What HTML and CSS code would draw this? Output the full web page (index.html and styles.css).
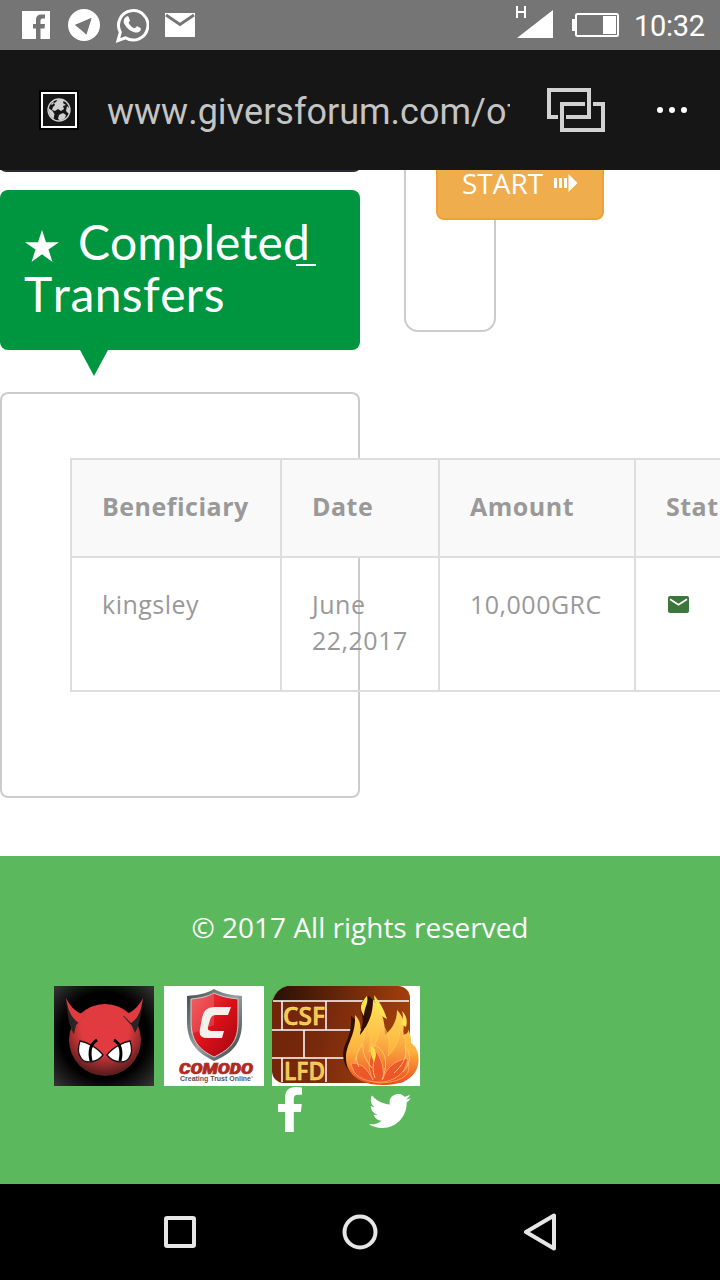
FILE: index.html
```
<!DOCTYPE html>
<html lang="en">
<head>
<meta charset="utf-8">
<title>Givers Forum</title>
<link rel="stylesheet" href="styles.css">
</head>
<body>
<header class="status">
  <div class="status-apps">
    <svg width="28" height="28" viewBox="0 0 28 28"><path fill="#fff" d="M0 0h28v28h-9.500v-10.500h4l.5-4.500h-4.500V9.500q0-2 2-2H23V3.500h-4q-5 0-5 5.500v4h-3v4.500h3V28H0z"/></svg>
    <svg width="32" height="32" viewBox="0 0 32 32"><circle cx="16" cy="16" r="16" fill="#fff"/><path fill="#757575" d="M23.500 9 7 16l5 2.500L20.500 12l-6 8 3.500 5.500z"/><path fill="#757575" d="M23.500 9 7 16l11.500 9.500z"/></svg>
    <svg width="34" height="36" viewBox="0 0 34 36"><path fill="none" stroke="#fff" stroke-width="3" d="M3 33.500l2.300-8.200A14.700 14.700 0 1 1 10.500 30.800z"/><path fill="#fff" d="M11.500 9.500c1.500-.8 2 0 2.400 1l1 2.700c.2 1-1.500 2-1.200 2.700 1.200 2.500 3.300 4.300 5.800 5.300.8.2 1.800-2.200 2.800-1.900l3.200 1.600c.8.500.3 2.500-.6 3.400-2.500 2.200-5.700 1.300-8.700-.2-3.300-1.700-6-4.800-7.300-8-.8-2.500.4-5.500 2.600-6.600z"/></svg>
    <svg width="30" height="24" viewBox="0 0 30 24"><path fill="#fff" d="M0 0h30v24H0z"/><path fill="none" stroke="#757575" stroke-width="2.800" d="M1 2l14 9.500L29 2"/></svg>
  </div>
  <div class="status-info">
    <div class="signal"><svg width="38" height="36" viewBox="0 0 38 36"><path fill="#fff" d="M37 7v28H1z"/><path fill="none" stroke="#fff" stroke-width="2" d="M1 3v12M9 3v12M1 9h8"/></svg></div>
    <svg width="48" height="24" viewBox="0 0 48 24"><path fill="#fff" d="M0 6h4v12H0zM31 3h13v18H31z"/><rect x="4" y="1" width="42" height="22" rx="1.500" fill="none" stroke="#fff" stroke-width="2"/></svg>
    <span class="clock">10:32</span>
  </div>
</header>
<div class="browser">
  <svg class="favicon" width="40" height="40" viewBox="0 0 40 40"><path fill="#000" d="M0 0h40v40H0z"/><rect x="3" y="3" width="34" height="34" fill="#161616" stroke="#fff" stroke-width="2"/><circle cx="20" cy="20" r="11" fill="none" stroke="#d0d0d0" stroke-width="1.300"/><path fill="#d0d0d0" d="M19 9l6 1-1 3 3 2-3 1 1 3-3 2-3-2-3 2-3-1 1-3 2-2-1-2 2-1zM9.500 18l4 3 2 3-1 5-4-4zM20 25l4-2 3 2-1 3-4 3-3-2zM28 16l3 3-1 5-3-3zM12 14l2-2 1 1-2 2z"/></svg>
  <div class="url">www.giversforum.com/of</div>
  <svg class="tabs" width="58" height="44" viewBox="0 0 58 44"><path fill="none" stroke="#d2d2d2" stroke-width="4" d="M11 29H2V2h40v27H19M38 16H15v26h41V16H46"/></svg>
  <div class="more"><i></i><i></i><i></i></div>
</div>
<main class="page">
  <div class="columns">
    <section class="left">
      <div class="previous"></div>
      <h1 class="callout"><svg class="star" width="34" height="32" viewBox="0 0 34 32"><path fill="#fff" d="M17 0l4 12.200h13l-10.500 7.400 4 12.400L17 24.300 6.500 32l4-12.400L0 12.200h13z"/></svg><span class="callout-word">Completed</span><br><span class="callout-line">Transfers</span></h1>
      <div class="panel">
        <table class="transfers">
          <colgroup><col class="c-name"><col class="c-date"><col class="c-amount"><col class="c-status"></colgroup>
          <tr class="head"><th>Beneficiary</th><th>Date</th><th>Amount</th><th>Status</th></tr>
          <tr class="entry"><td>kingsley</td><td>June<br>22,2017</td><td>10,000GRC</td><td><svg class="mail" width="21" height="17" viewBox="0 0 21 17"><rect width="21" height="17" rx="2" fill="#3c763d"/><path fill="none" stroke="#fff" stroke-width="1.800" d="M2 3.200l8.500 5.500L19 3.200"/></svg></td></tr>
        </table>
      </div>
    </section>
    <section class="stub">
      <div class="start">START<svg width="24" height="18" viewBox="0 0 24 18"><path fill="#fff" d="M0 4h3v10H0zM5 4h3v10H5zM10 4h3v10h-3zM14.500 0 23.500 9l-9 9z"/></svg></div>
    </section>
  </div>
  <footer class="footer">
    <p class="rights">© 2017 All rights reserved</p>
    <div class="badges">
      <svg class="devil" width="100" height="100" viewBox="0 0 100 100">
        <defs>
          <radialGradient id="night" r=".72"><stop offset=".6" stop-color="#000"/><stop offset="1" stop-color="#3a3a3a"/></radialGradient>
          <radialGradient id="face" cx=".5" cy=".33" r=".67"><stop offset=".5" stop-color="#e13b3f"/><stop offset="1" stop-color="#511b1c"/></radialGradient>
        </defs>
        <path fill="url(#night)" d="M0 0h100v100H0z"/>
        <circle cx="51" cy="54" r="36" fill="url(#face)"/>
        <path fill="#292425" d="M12 12c2 12 6 15 19 18l-9 9-2 9c-5-7-7-22-8-36zM89 12c-3 12-8 15-20 18l9 10 3 7c5-9 6-18 8-35z"/>
        <path fill="#e13b3f" d="M12 12c5 10 11 15 20 17l-7 8C17 32 14 24 12 12zM89 12c-5 10-12 15-20 17l8 8c8-5 10-13 12-25z"/>
        <path fill="#fff" stroke="#171314" stroke-width="1.300" d="M26 55c6 1 17 6 23 14-6 8-18 9-22 3-3-4-3-11-1-17zM76 55c-6 1-17 6-23 14 6 8 18 9 22 3 3-4 3-11 1-17z"/>
        <path fill="none" stroke="#000" stroke-width="3" d="M43 54c-7 4-8 12-6 21M60 54c7 4 8 12 6 21"/>
      </svg>
      <svg class="shield" width="100" height="100" viewBox="0 0 100 100">
        <defs>
          <linearGradient id="steel" x2="1" y2="1"><stop stop-color="#41494d"/><stop offset=".5" stop-color="#9ba1a3"/><stop offset="1" stop-color="#30383b"/></linearGradient>
          <linearGradient id="red" x2="1" y2="1"><stop stop-color="#f2474a"/><stop offset=".5" stop-color="#dc1019"/><stop offset="1" stop-color="#9c0810"/></linearGradient>
        </defs>
        <path fill="#fff" d="M0 0h100v100H0z"/>
        <path fill="url(#steel)" d="M50 3c9 5 18 6 28 7v26c0 21-9 31-28 39C32 66 23 56 23 35V10c10-1 19-2 27-7z"/>
        <path fill="url(#red)" stroke="#ccc" stroke-width="1" d="M50 7c8 4 16 5 24 6v23c0 19-7 27-24 35C34 63 27 54 27 35V13c9-1 16-2 23-6z"/>
        <path fill="#fff" opacity=".15" d="M50 8v31l-23 9V13c9-1 16-2 23-5z"/>
        <path fill="#f4f0ee" d="M67 21 64 29H52q-5 0-6 5l-2 7q-1 4 4 4h12l-2 7H43q-9 0-7-9l2-11q2-11 12-11z"/>
        <text class="brand" x="15" y="88" textLength="74" lengthAdjust="spacingAndGlyphs">COMODO</text>
        <text class="slogan" x="16" y="95" textLength="71" lengthAdjust="spacingAndGlyphs">Creating Trust Online</text>
        <circle cx="88" cy="91" r=".7" fill="#777"/>
      </svg>
      <svg width="148" height="100" viewBox="0 0 148 100">
        <defs>
          <linearGradient id="brick" x2="1" y2=".2"><stop stop-color="#702409"/><stop offset=".45" stop-color="#79290c"/><stop offset="1" stop-color="#a0400d"/></linearGradient>
          <linearGradient id="roof"><stop stop-color="#291005"/><stop offset="1" stop-color="#a53e0d"/></linearGradient>
          <linearGradient id="fire" x2="0" y2="1"><stop stop-color="#ffe15b"/><stop offset=".6" stop-color="#fdb23c"/><stop offset="1" stop-color="#ea4a22"/></linearGradient>
          <linearGradient id="tongue" x2="0" y2="1"><stop stop-color="#ffd860"/><stop offset="1" stop-color="#f0501f"/></linearGradient>
        </defs>
        <path fill="#fff" d="M0 0h148v100H0z"/>
        <rect width="138" height="97" rx="12" fill="url(#brick)"/>
        <path fill="url(#roof)" d="M1 15Q5 2 16 0h105q14 2 16 15z"/>
        <path fill="#5cb85c" d="M0 0h15Q5 2 0 15z"/>
        <path fill="none" stroke="#fff" stroke-width="1.500" d="M1 15h136M0 44h105M0 72h85M10 15v29M54 15v29M32 44v28M10 72v24M54 72v24M94 15v29"/>
        <text class="wall" x="11" y="39" textLength="42" lengthAdjust="spacingAndGlyphs">CSF</text>
        <text class="wall" x="12" y="94" textLength="41" lengthAdjust="spacingAndGlyphs">LFD</text>
        <path fill="#300f07" d="M100 97C78 92 68 78 72 62c2-8 8-14 7-32 7 5 9 10 9 16 4-9 3-14 1-22-1-8 3-12 8-14l6 6 8 30z"/>
        <path fill="url(#fire)" d="M110 99c-22 0-36-11-36-27 0-15 10-22 9-43 6 6 6 12 5 20 8-10 13-20 13-35 9 9 12 22 12 35 7-6 12-14 12-25 8 8 7 16 6 25 4-1 6-3 5-6 3 6 3 10 3 14 6 4 9 12 7 22-3 13-15 20-36 20z"/>
        <path fill="#ffe252" d="M95 10c-8 8-7 14-3 20 0-8 5-13 3-20zM130 25c2 6 0 9-1 13l5 3c2-7 0-12-4-16z"/>
        <path fill="#ffe252" d="M102 9c5 6 10 14 13 24-6-2-12-10-13-24z"/>
        <path fill="url(#tongue)" stroke="#ffcb58" stroke-width="1" opacity=".65" d="M108 97c-22-3-30-15-22-32 3-7 8-11 7-23 8 7 5 16 4 24 8-8 12-18 9-33 13 14 12 25 10 37 7-7 12-16 12-29 9 14 4 22 6 33 8 12-1 22-26 23z"/>
        <path fill="#ed542b" stroke="#ffad62" stroke-width="1" opacity=".85" d="M79 77c13 0 17 8 22 17-5-12-6-21 2-31 3 7 10 13 8 30 3-10 10-18 25-21-2 14-12 24-29 24-16 0-26-6-28-19z"/>
        <path fill="none" stroke="#ffc36e" stroke-width="1" d="M103 92c-6-15 5-23-4-34 15 4 18 18 11 36M122 87c8-7 14-16 11-26 8 8 4 19-2 25M87 81c-5-9-2-16 4-23-1 11 5 19 9 24"/>
        <path fill="#ffde45" d="M99 60c6 4 6 9 3 16-2-5-4-9-3-16z"/>
      </svg>
    </div>
    <div class="social">
      <svg width="24" height="45" viewBox="0 0 24 45"><path fill="#fff" d="M24 .5v7.200h-4.200q-4 0-4 4V17h8l-1 8h-7v20H7V25H0v-8h7v-6Q7 0 18 0z"/></svg>
      <svg class="bird" width="42" height="34" viewBox="0 0 24 19.500" preserveAspectRatio="none"><path fill="#fff" d="M24 2.300c-.9.400-1.800.7-2.800.8 1-.6 1.800-1.600 2.200-2.700-1 .6-2 1-3.100 1.200A4.900 4.900 0 0 0 11.900 6C7.800 5.800 4.200 3.900 1.700.9c-1.300 2.200-.7 5.100 1.500 6.600-.8 0-1.600-.2-2.200-.6 0 2.300 1.600 4.400 3.900 4.900-.7.200-1.500.2-2.200.1.600 2 2.400 3.400 4.600 3.400A9.900 9.900 0 0 1 0 17.300 14 14 0 0 0 7.500 19.500c9.100 0 14.300-7.700 14-14.600 1-.7 1.800-1.600 2.500-2.600z"/></svg>
    </div>
  </footer>
</main>
<nav class="keys">
  <svg width="32" height="32" viewBox="0 0 32 32"><rect x="2" y="2" width="28" height="28" rx="1"/></svg>
  <svg width="36" height="36" viewBox="0 0 36 36"><circle cx="18" cy="18" r="15.500"/></svg>
  <svg width="34" height="38" viewBox="0 0 34 38"><path stroke-linejoin="round" d="M31 2.500v33L3 19z"/></svg>
</nav>
</body>
</html>
```
FILE: styles.css
```
* { box-sizing: border-box; }
body { margin: 0; width: 720px; height: 1280px; overflow: hidden; display: flex; flex-direction: column; background: #fff; font-family: "Open Sans", sans-serif; }
svg { display: block; flex: none; }

.status { height: 50px; flex: none; background: #757575; display: flex; justify-content: space-between; padding: 0 15px 0 22px; }
.status-apps, .status-info { display: flex; align-items: center; }
.status-apps { gap: 18px; }
.status-apps svg:nth-child(3) { margin: -1px 0 0 -3px; }
.status-apps svg:nth-child(4) { margin-left: -2px; }
.signal { padding-bottom: 9px; margin-right: 18px; }
.clock { width: 71px; font: 29px/50px Roboto, sans-serif; letter-spacing: -.3px; color: #fff; margin-left: 14px; padding-top: 2px; white-space: nowrap; }

.browser { height: 120px; flex: none; background: #161616; display: flex; align-items: center; padding-left: 39px; }
.url { width: 403px; margin-left: 28px; overflow: hidden; white-space: nowrap; font: 36px/48px Roboto, sans-serif; font-kerning: none; color: #c4c4c4; padding-top: 4px; }
.tabs { margin-left: 37px; }
.more { display: flex; gap: 6px; margin-left: 52px; }
.more i { width: 6px; height: 6px; border-radius: 50%; background: #fff; }

.page { height: 1014px; flex: none; overflow: hidden; }
.columns { display: flex; gap: 44px; height: 686px; }
.left { width: 360px; flex: none; }
.previous { height: 12px; margin: -10px 0 18px; border-radius: 8px; background: #2b2c38; }
.callout { position: relative; height: 160px; margin: 0 0 42px; padding: 26px 24px; border-radius: 8px; background: #00963f; color: #fff; font: 400 48px/52px Lato, sans-serif; font-kerning: none; }
.callout::before { content: ""; position: absolute; left: 80px; top: 160px; width: 28px; height: 26px; background: #00963f; clip-path: polygon(0 0, 100% 0, 50% 100%); }
.star { display: inline-block; margin: 0 19px 0 1px; vertical-align: -2px; }
.callout-line { letter-spacing: .35px; }
.callout-word { position: relative; }
.callout-word::after { content: ""; position: absolute; right: -6px; bottom: 4px; width: 20px; height: 2px; background: #fff; }

.panel { height: 406px; padding: 64px 68px; border: 2px solid #ccc; border-radius: 8px; }
.transfers { width: 746px; table-layout: fixed; border-collapse: collapse; color: #999; font-size: 25px; line-height: 36px; letter-spacing: .5px; text-align: left; white-space: nowrap; }
.c-name { width: 210px; }
.c-date { width: 158px; }
.c-amount { width: 196px; }
.c-status { width: 180px; }
.transfers th, .transfers td { padding: 28px 30px 32px; border: 2px solid #ddd; vertical-align: top; }
.head { background: #f9f9f9; }
.mail { margin: 10px 0 0 2px; }

.stub { width: 92px; height: 162px; flex: none; padding-left: 30px; border: 2px solid #ccc; border-top: 0; border-radius: 0 0 14px 14px; }
.start { width: 168px; height: 68px; margin-top: -18px; display: flex; align-items: center; gap: 11px; padding: 0 0 6px 24px; background: #f0ad4e; border: 2px solid #eea236; border-radius: 8px; color: #fff; font-size: 28px; }

.footer { height: 328px; background: #5cb85c; color: #fff; padding-top: 51px; }
.rights { margin: 0; text-align: center; font-size: 28px; line-height: 40px; }
.badges { display: flex; padding: 39px 0 0 54px; }
.devil { margin-right: 10px; }
.shield { margin-right: 8px; }
.brand { font: italic 900 14px Roboto, sans-serif; fill: #b02a25; stroke: #b02a25; stroke-width: .7px; }
.slogan { font: bold 7.500px "Liberation Sans", sans-serif; fill: #555; }
.wall { font: 600 25px "Open Sans", sans-serif; fill: #f5c843; stroke: #ffe887; stroke-width: .5px; }
.social { display: flex; align-items: center; gap: 67px; padding: 1px 0 0 278px; }
.bird { margin-top: 2px; }

.keys { height: 96px; flex: none; background: #000; display: flex; align-items: center; padding-left: 164px; }
.keys svg { fill: none; stroke: #e6e6e6; stroke-width: 4px; }
.keys svg:nth-child(2) { margin-left: 146px; }
.keys svg:nth-child(3) { margin-left: 145px; }
```
